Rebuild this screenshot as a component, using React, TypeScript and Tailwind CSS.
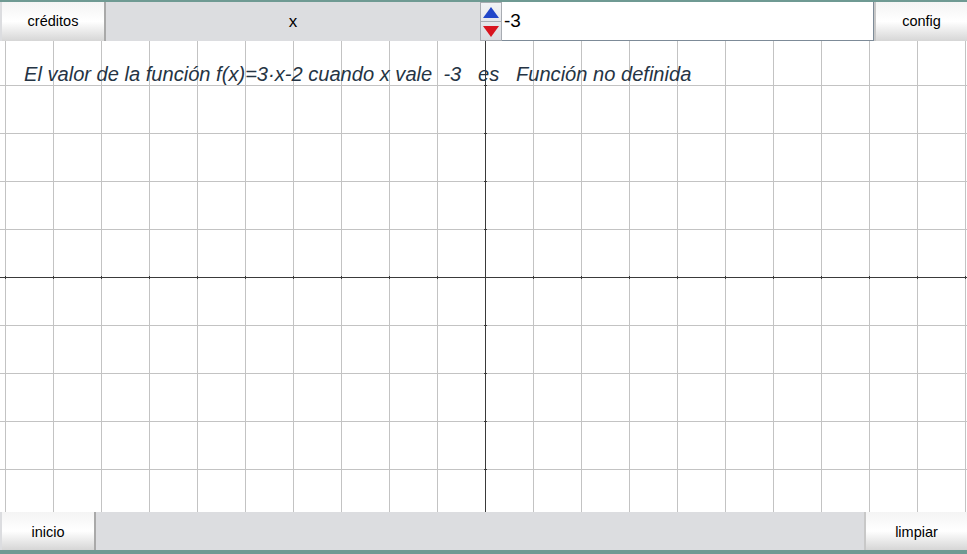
import React from "react";

const W = 967;
const H = 471;

function Grid() {
  const vx: number[] = [];
  for (let x = 5; x < W; x += 48) vx.push(x);
  const hy: number[] = [];
  for (let y = 44; y < H; y += 48) hy.push(y);
  const ax = 485;
  const ay = 236;
  return (
    <svg className="absolute inset-0" width={W} height={H} viewBox={`0 0 ${W} ${H}`}>
      {vx.map((x) => (
        <line key={"v" + x} x1={x + 0.5} y1={0} x2={x + 0.5} y2={H} stroke="#c3c3c3" strokeWidth={1} />
      ))}
      {hy.map((y) => (
        <line key={"h" + y} x1={0} y1={y + 0.5} x2={W} y2={y + 0.5} stroke="#c3c3c3" strokeWidth={1} />
      ))}
      <line x1={0} y1={ay + 0.5} x2={W} y2={ay + 0.5} stroke="#3a3a3a" strokeWidth={1} />
      <line x1={ax + 0.5} y1={0} x2={ax + 0.5} y2={H} stroke="#3a3a3a" strokeWidth={1} />
      {vx.map((x) => (
        <line key={"tx" + x} x1={x + 0.5} y1={ay - 1} x2={x + 0.5} y2={ay + 2} stroke="#3a3a3a" strokeWidth={1} />
      ))}
      {hy.map((y) => (
        <line key={"ty" + y} x1={ax - 1} y1={y + 0.5} x2={ax + 2} y2={y + 0.5} stroke="#3a3a3a" strokeWidth={1} />
      ))}
    </svg>
  );
}

function Btn({ label, className }: { label: string; className: string }) {
  return (
    <div
      className={
        "flex shrink-0 items-center justify-center bg-gradient-to-b from-[#f4f4f4] via-[#ffffff] to-[#d6d6d6] text-[14.5px] text-black " +
        className
      }
    >
      {label}
    </div>
  );
}

export default function App() {
  return (
    <div
      className="flex h-[554px] w-[967px] flex-col overflow-hidden bg-white"
      style={{ fontFamily: '"Liberation Sans", Arial, sans-serif' }}
    >
      <div className="h-[2px] bg-[#6f9a93]" />
      <div className="flex h-[39px] bg-[#dcdde0]">
        <Btn label="créditos" className="ml-[2px] w-[104px] border-r-2 border-[#a9a9a9]" />
        <div className="flex w-[374px] shrink-0 items-center justify-center text-[17px] text-black">x</div>
        <div className="flex w-[22px] shrink-0 flex-col border border-[#a8acb2] bg-gradient-to-b from-[#f2f3f6] to-[#d9dbe0]">
          <div className="flex flex-1 items-center justify-center border-b border-[#a8acb2]">
            <svg width="16" height="11" viewBox="0 0 16 11">
              <polygon points="8,0 16,11 0,11" fill="#2146c9" />
            </svg>
          </div>
          <div className="flex flex-1 items-center justify-center">
            <svg width="16" height="11" viewBox="0 0 16 11">
              <polygon points="0,0 16,0 8,11" fill="#d8131f" />
            </svg>
          </div>
        </div>
        <div className="flex w-[372px] shrink-0 items-center border-b border-r border-[#7d8b98] bg-white pl-[2px] text-[19px] text-black">
          -3
        </div>
        <Btn label="config" className="w-[93px] border-l-2 border-[#c8c8c8]" />
      </div>
      <div className="relative h-[471px]">
        <Grid />
        <div className="relative whitespace-pre pl-[24px] pt-[21px] text-[20.1px] italic leading-[24px] text-[#253444]">
          {"El valor de la función f(x)=3·x-2 cuando x vale  -3   es   Función no definida"}
        </div>
      </div>
      <div className="flex h-[38px] justify-between bg-[#dcdde0]">
        <Btn label="inicio" className="ml-[2px] w-[94px] border-r-2 border-[#a9a9a9] pt-[3px]" />
        <Btn label="limpiar" className="w-[103px] border-l-2 border-[#c8c8c8] pt-[3px]" />
      </div>
      <div className="h-[4px] bg-[#6f9a93]" />
    </div>
  );
}
